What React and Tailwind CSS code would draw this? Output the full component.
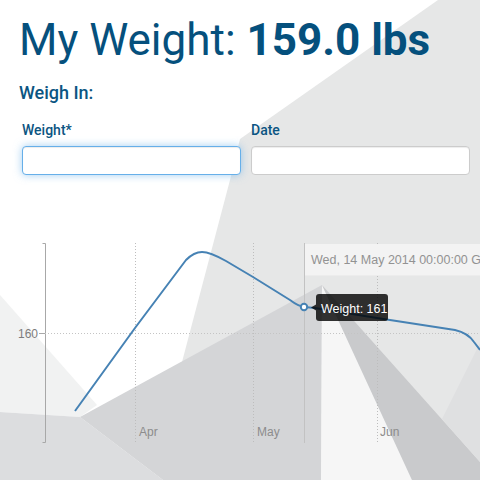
import React from 'react';

const linePath =
  'M75,411 L135,328 L186,260 Q194,252 202,252 Q210,252 226,261 L253,277 L290,300 Q298,306 304,307 L315,308 L377,318 L455,330 Q468,333 474,342 L480,350';

const Backdrop = () => (
  <svg className="absolute inset-0" width="480" height="480" viewBox="0 0 480 480">
    <rect width="480" height="480" fill="#ffffff" />
    <polygon points="438,0 480,0 480,480 170,480 182,362 230,180 240,139" fill="#e6e7e7" />
    <polygon points="0,295 97,405 80,417 0,412" fill="#f1f2f2" />
    <polygon points="0,412 80,417 163,480 0,480" fill="#dcdddf" />
    <polygon points="80,417 322,285 321,480 163,480" fill="#d4d5d7" />
    <polygon points="322,285 412,480 321,480" fill="#f6f6f6" />
    <polygon points="322,285 480,462 480,480 412,480" fill="#c9cacc" />
    <polygon points="442,419 480,343 480,462" fill="#dfe0e1" />
  </svg>
);

// chart coordinates are page coordinates minus 200 on y
const Chart = () => (
  <svg width="480" height="280" viewBox="0 200 480 280" className="block" style={{ fontFamily: '"Liberation Sans", Arial, sans-serif' }}>
    <g stroke="#a8a8a8" strokeWidth="1" fill="none">
      <path d="M42.5,243.5 H45.5 V442.5 H42.5" />
      <path d="M39,333.5 H45" />
    </g>
    <path d="M45,333.5 H480" stroke="#c4c4c4" strokeDasharray="1 2" />
    <g stroke="#bdbdbd" strokeDasharray="1 2">
      <path d="M135.5,243 V443" />
      <path d="M253.5,243 V443" />
      <path d="M377.5,243 V443" />
    </g>
    <text x="38" y="337.5" fontSize="12" fill="#7c7c7c" textAnchor="end">160</text>
    <g fontSize="12" fill="#8c8c8c">
      <text x="139" y="436">Apr</text>
      <text x="257" y="436">May</text>
      <text x="380" y="436">Jun</text>
    </g>

    <path d="M304.5,243 V443" stroke="#c2c2c2" />
    <rect x="305" y="244" width="175" height="31" fill="#f3f3f3" />
    <path d="M305,275.5 H480" stroke="#ececec" />
    <text x="311" y="264" fontSize="12.5" fill="#929292">Wed, 14 May 2014 00:00:00 GMT</text>

    <path d={linePath} fill="none" stroke="#4682b4" strokeWidth="2" strokeLinejoin="round" />

    <polygon points="311,307.5 316,304.5 316,310.5" fill="rgba(0,0,0,0.8)" />
    <rect x="316" y="294" width="72" height="27" rx="3" fill="rgba(0,0,0,0.8)" />
    <text x="321" y="312.5" fontSize="12.5" fill="#ffffff">Weight: 161</text>

    <circle cx="304" cy="307" r="3.2" fill="#ffffff" stroke="#4682b4" strokeWidth="2" />
  </svg>
);

export default function App() {
  return (
    <div className="relative w-[480px] h-[480px] overflow-hidden font-['Roboto',sans-serif]">
      <Backdrop />
      <div className="relative">
        <div className="pl-[19px] pr-[10px] pt-[15px]">
          <h1 className="text-[44px] leading-[50px] text-[#05507d] whitespace-nowrap">
            My Weight: <span className="font-bold">159.0 lbs</span>
          </h1>
          <h2 className="mt-[16px] text-[18px] leading-[24px] font-medium text-[#0b5582]">Weigh In:</h2>
          <div className="mt-[15px] ml-[3px] grid grid-cols-2 gap-[10px]">
            <div>
              <label className="block text-[14px] leading-[20px] font-medium text-[#0b5582]">Weight*</label>
              <input
                type="text"
                className="mt-[6px] block w-full h-[29px] rounded-[4px] bg-white border border-[#66afe9] outline-none shadow-[inset_0_1px_1px_rgba(0,0,0,0.075),0_0_8px_rgba(102,175,233,0.6)]"
              />
            </div>
            <div>
              <label className="block text-[14px] leading-[20px] font-medium text-[#0b5582]">Date</label>
              <input
                type="text"
                className="mt-[6px] block w-full h-[29px] rounded-[4px] bg-white border border-[#cccccc] outline-none shadow-[inset_0_1px_1px_rgba(0,0,0,0.075)]"
              />
            </div>
          </div>
        </div>
        <div className="mt-[25px]">
          <Chart />
        </div>
      </div>
    </div>
  );
}
